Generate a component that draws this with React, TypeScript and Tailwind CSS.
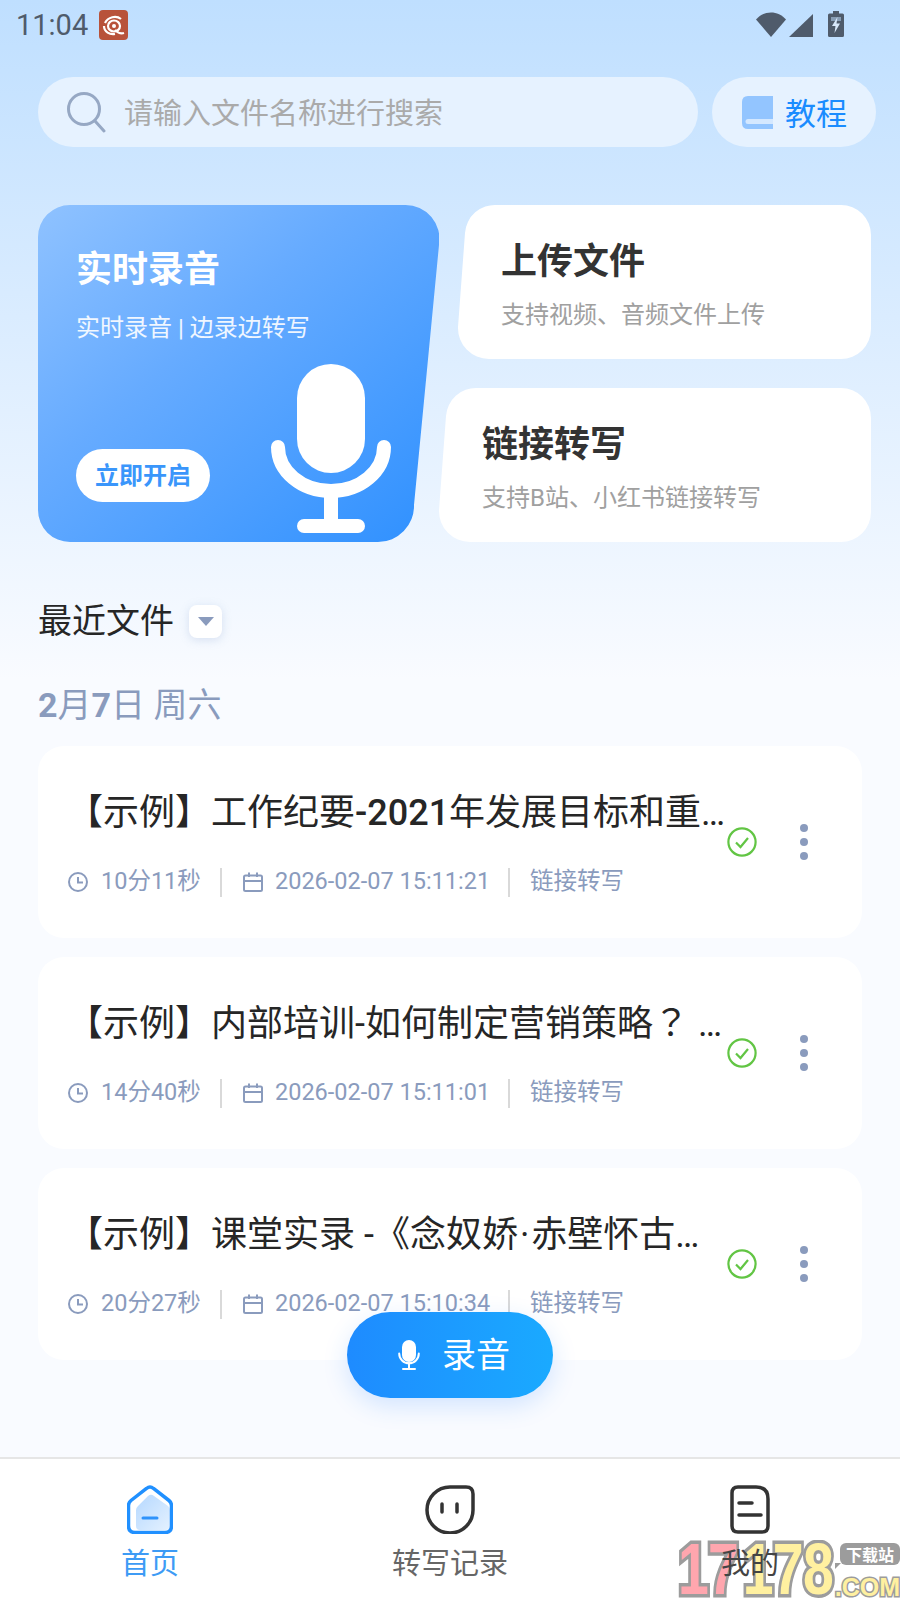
import type { ReactNode } from "react";

const files: { title: ReactNode; duration: string; date: string }[] = [
  {
    title: (
      <>
        【示例】工作纪要<span className="font-medium">-2021</span>年发展目标和重点工作
      </>
    ),
    duration: "10分11秒",
    date: "2026-02-07 15:11:21",
  },
  {
    title: (
      <>
        【示例】内部培训-如何制定营销策略
        <span className="font-['Roboto','Noto_Sans_CJK_TC',sans-serif]">？</span> 如何执行
      </>
    ),
    duration: "14分40秒",
    date: "2026-02-07 15:11:01",
  },
  {
    title: (
      <>
        【示例】课堂实录 -《念奴娇<span className="px-[2px]">·</span>赤壁怀古》赏析
      </>
    ),
    duration: "20分27秒",
    date: "2026-02-07 15:10:34",
  },
];

function StatusBar() {
  return (
    <div className="flex h-[50px] items-center pl-[16px] pr-[56px] text-[#4f5b6b]">
      <span className="text-[29px] leading-none">11:04</span>
      <div className="ml-[11px] flex h-[30px] w-[29px] items-center justify-center rounded-[4px] bg-[#b8523a]">
        <svg width="23" height="23" viewBox="0 0 23 23" fill="none" stroke="#fff" strokeWidth="2.2">
          <path d="M3 9C6 3 14 1 19 5" />
          <ellipse cx="12" cy="12" rx="6" ry="5.5" />
          <path d="M2 12c0 6 6 9 11 8M13 16c3 3 6 4 9 3" />
          <circle cx="12" cy="12" r="2" fill="#fff" stroke="none" />
        </svg>
      </div>
      <div className="mb-[3px] ml-auto flex items-end">
        <svg width="30" height="25" viewBox="0 0 30 25" fill="#4f5b6b">
          <path d="M0 7.5C8-2 22-2 30 7.5L15 25Z" />
        </svg>
        <svg className="ml-[3px]" width="24" height="23" viewBox="0 0 24 23" fill="#4f5b6b">
          <path d="M24 0V23H0Z" />
        </svg>
        <svg className="ml-[15px]" width="16" height="26" viewBox="0 0 16 26">
          <path d="M5 0H11V2.5H14.5Q16 2.5 16 4V24.5Q16 26 14.5 26H1.5Q0 26 0 24.5V4Q0 2.5 1.5 2.5H5Z" fill="#4f5b6b" />
          <path d="M3 6H13V10H3Z" fill="#bfdfff" opacity=".5" />
          <path d="M9.5 6L4 15H7.5L6.5 22L12 12.5H8.5Z" fill="#d8e8fa" />
        </svg>
      </div>
    </div>
  );
}

function SearchRow() {
  return (
    <div className="mt-[27px] flex h-[70px] pl-[38px]">
      <div className="flex w-[660px] items-center rounded-full bg-[#e6f2ff] pl-[29px]">
        <svg width="40" height="42" viewBox="0 0 40 42" fill="none" stroke="#96a8c4" strokeWidth="3" strokeLinecap="round">
          <circle cx="17" cy="18" r="15.5" />
          <path d="M28 30L37 40" />
        </svg>
        <span className="ml-[17px] pt-[4px] text-[29px] leading-none text-[#aaaaaa]">请输入文件名称进行搜索</span>
      </div>
      <div className="ml-[14px] flex w-[164px] items-center rounded-full bg-[#e6f2ff] pl-[30px]">
        <svg width="31" height="33" viewBox="0 0 31 33">
          <path d="M6 0H31V33H6Q0 33 0 27V6Q0 0 6 0Z" fill="#93c5ff" />
          <path d="M6 23H31V28H6Q3.5 28 3.5 25.5T6 23Z" fill="#d4e8ff" />
        </svg>
        <span className="ml-[12px] pt-[4px] text-[31px] leading-none text-[#1a8cff]">教程</span>
      </div>
    </div>
  );
}

function HeroCards() {
  return (
    <div className="mt-[58px] flex pl-[38px]">
      <div className="relative h-[337px] w-[401px] bg-[linear-gradient(140deg,#8fc2ff_0%,#66abff_40%,#2e90ff_100%)] pl-[38px] pt-[40px] [clip-path:path('M32_0H367A34_34_0_0_1_401_40L376_300A36_36_0_0_1_340_337H32A32_32_0_0_1_0_305V32A32_32_0_0_1_32_0Z')]">
        <div className="text-[36px] font-bold leading-[50px] text-white">实时录音</div>
        <div className="mt-[16px] text-[24px] leading-[34px] text-white/90">实时录音 | 边录边转写</div>
        <div className="mt-[104px] flex h-[53px] w-[134px] items-center justify-center rounded-full bg-white text-[24px] font-bold text-[#3a96fb]">
          立即开启
        </div>
        <svg className="absolute left-[233px] top-[159px]" width="120" height="169" viewBox="0 0 120 169" fill="#fff">
          <rect x="26" y="0" width="68" height="109" rx="34" />
          <path d="M7 83A53 44 0 0 0 113 83" fill="none" stroke="#fff" strokeWidth="14" strokeLinecap="round" />
          <rect x="53" y="127" width="14" height="32" />
          <rect x="26" y="155" width="68" height="14" rx="7" />
        </svg>
      </div>
      <div className="flex h-[337px] w-[432px] flex-col justify-between">
        <div className="h-[154px] bg-white pl-[62px] pt-[32px] [clip-path:path('M58_0H402A30_30_0_0_1_432_30V124A30_30_0_0_1_402_154H50A31_31_0_0_1_19_122L26_28A30_30_0_0_1_58_0Z')]">
          <div className="text-[36px] font-bold leading-[50px] text-[#333333]">上传文件</div>
          <div className="mt-[11px] text-[24px] leading-[34px] text-[#a0a0a0]">支持视频、音频文件上传</div>
        </div>
        <div className="h-[154px] bg-white pl-[43px] pt-[32px] [clip-path:path('M38_0H402A30_30_0_0_1_432_30V124A30_30_0_0_1_402_154H31A31_31_0_0_1_0_122L7_28A30_30_0_0_1_38_0Z')]">
          <div className="text-[36px] font-bold leading-[50px] text-[#333333]">链接转写</div>
          <div className="mt-[11px] text-[24px] leading-[34px] text-[#a0a0a0]">支持B站、小红书链接转写</div>
        </div>
      </div>
    </div>
  );
}

function ClockIcon() {
  return (
    <svg width="20" height="20" viewBox="0 0 20 20" fill="none" stroke="#8a9bbd" strokeWidth="2">
      <circle cx="10" cy="10" r="9" />
      <path d="M10 5V10.5H15" />
    </svg>
  );
}

function CalendarIcon() {
  return (
    <svg width="20" height="20" viewBox="0 0 20 20" fill="none" stroke="#8a9bbd" strokeWidth="2">
      <rect x="1" y="3.5" width="18" height="15.5" rx="1.5" />
      <path d="M1 9H19M6 0.5V5M14 0.5V5" />
    </svg>
  );
}

function FileCard({ title, duration, date }: { title: ReactNode; duration: string; date: string }) {
  return (
    <div className="flex h-[192px] items-center rounded-[26px] bg-white pl-[30px]">
      <div className="h-full w-[659px] pt-[45px]">
        <div className="ml-[-1px] truncate text-[36px] leading-[44px] text-[#262626]">{title}</div>
        <div className="mt-[32px] flex h-[30px] items-center whitespace-nowrap text-[23.5px] leading-none text-[#8a9bbd]">
          <ClockIcon />
          <span className="ml-[13px] w-[98px]">{duration}</span>
          <div className="ml-[21px] h-[29px] w-[2px] bg-[#d9d9d9]" />
          <div className="ml-[21px]">
            <CalendarIcon />
          </div>
          <span className="ml-[12px] w-[213px]">{date}</span>
          <div className="ml-[20px] h-[29px] w-[2px] bg-[#d9d9d9]" />
          <span className="ml-[20px]">链接转写</span>
        </div>
      </div>
      <svg width="30" height="30" viewBox="0 0 30 30" fill="none" stroke="#62c544">
        <circle cx="15" cy="15" r="13.6" strokeWidth="2.2" />
        <path d="M9 15.5L13.5 20L21 11" strokeWidth="2.2" />
      </svg>
      <div className="ml-[43px] flex flex-col gap-[6px]">
        <div className="size-[8px] rounded-full bg-[#8a9bbd]" />
        <div className="size-[8px] rounded-full bg-[#8a9bbd]" />
        <div className="size-[8px] rounded-full bg-[#8a9bbd]" />
      </div>
    </div>
  );
}

function BottomNav() {
  return (
    <div className="relative flex h-[143px] border-t-2 border-[#e6e6e6] bg-white pt-[26px]">
      <div className="flex w-[300px] flex-col items-center">
        <svg width="46" height="49" viewBox="0 0 46 49" fill="none">
          <defs>
            <linearGradient id="homeFill" x1="0" y1="0" x2="1" y2="1">
              <stop offset="0" stopColor="#b5d8ff" />
              <stop offset="1" stopColor="#e4f1ff" />
            </linearGradient>
          </defs>
          <path d="M21 11Q24 8.500 27 11L41 21Q43 23 43 25V41Q43 45 39 45H13Q9 45 9 41V25Q9 23 11 21Z" fill="url(#homeFill)" />
          <path d="M19.500 3.500Q23 .5 26.500 3.500L42 15.500Q44.500 17.500 44.500 20.500V41Q44.500 47.500 38 47.500H8Q1.500 47.500 1.500 41V20.500Q1.500 17.500 4 15.500Z" stroke="#2090ff" strokeWidth="3.500" />
          <path d="M16 33H30" stroke="#2f93fb" strokeWidth="3" strokeLinecap="round" />
        </svg>
        <span className="mt-[10px] text-[29px] leading-[40px] text-[#3d9bf5]">首页</span>
      </div>
      <div className="flex w-[300px] flex-col items-center">
        <svg width="50" height="49" viewBox="0 0 50 49" fill="none" stroke="#333" strokeWidth="3.500" strokeLinecap="round">
          <path d="M25 2H41Q48 2 48 9V25A23 23 0 1 1 25 2Z" />
          <path d="M17 19V27M32 19V27" />
        </svg>
        <span className="mt-[10px] text-[29px] leading-[40px] text-[#666666]">转写记录</span>
      </div>
      <div className="flex w-[300px] flex-col items-center">
        <svg width="40" height="49" viewBox="0 0 40 49" fill="none" stroke="#333" strokeWidth="3.500" strokeLinecap="round">
          <path d="M8 2H26Q38 2 38 14V41Q38 47 32 47H8Q2 47 2 41V8Q2 2 8 2Z" />
          <path d="M9 18H22M9 30H31" />
        </svg>
        <span className="relative z-10 mt-[10px] text-[29px] leading-[40px] text-[#444444]">我的</span>
      </div>
      {/* site watermark sits over the corner of the tab bar */}
      <div className="absolute bottom-0 right-0 h-[60px] w-[223px] overflow-hidden font-['Liberation_Sans',sans-serif] font-bold">
        <div className="absolute left-[1px] top-[-7px] flex origin-left scale-x-[0.77] text-[72px] leading-[72px] tracking-[-1px] [-webkit-text-stroke:7px_#9c9c9c] [paint-order:stroke_fill]">
          <span className="text-[#ffa6ae]">17</span>
          <span className="ml-[6px] text-[#fff0a0]">178</span>
        </div>
        <div className="absolute right-0 top-[3px] flex h-[22px] w-[60px] items-center justify-center rounded-[6px] bg-[#9c9c9c] font-['Noto_Sans_CJK_SC',sans-serif] text-[16px] leading-none text-white">
          下载站
        </div>
        <div className="absolute left-[158px] top-[23px] h-0 w-0 border-r-[6px] border-t-[6px] border-r-transparent border-t-[#9c9c9c]" />
        <div className="absolute right-0 top-[33px] text-[25px] leading-[28px] text-[#fff0a0] [-webkit-text-stroke:3px_#9c9c9c] [paint-order:stroke_fill]">
          .COM
        </div>
      </div>
    </div>
  );
}

export default function App() {
  return (
    <div className="relative flex h-[1600px] w-[900px] flex-col overflow-hidden bg-[linear-gradient(180deg,#bfdfff_0px,#f9fbff_680px)] font-['Roboto','Noto_Sans_CJK_SC',sans-serif]">
      <StatusBar />
      <SearchRow />
      <HeroCards />

      <div className="mt-[59px] flex items-center pl-[38px]">
        <span className="text-[34px] leading-[40px] text-[#262626]">最近文件</span>
        <div className="ml-[15px] flex size-[33px] items-center justify-center rounded-[8px] bg-white shadow-[0_2px_10px_rgba(120,150,200,0.25)]">
          <div className="h-0 w-0 border-x-[8px] border-t-[9px] border-x-transparent border-t-[#8a9bbd]" />
        </div>
      </div>
      <div className="mt-[42px] pl-[38px] text-[34px] leading-[44px] text-[#8a9bbd]">
        <span className="font-bold">2</span>月<span className="font-bold">7</span>日 周六
      </div>

      <div className="mt-[19px] flex w-[862px] flex-col gap-[19px] pl-[38px]">
        {files.map((file) => (
          <FileCard key={file.date} title={file.title} duration={file.duration} date={file.date} />
        ))}
      </div>

      <div className="flex-1" />
      <BottomNav />

      <div className="absolute left-[347px] top-[1312px] flex h-[86px] w-[206px] items-center rounded-full bg-[linear-gradient(90deg,#1e8bff,#1aaaff)] pl-[51px] shadow-[0_8px_24px_rgba(40,130,255,0.18)]">
        <svg width="22" height="30" viewBox="0 0 22 30" fill="#fff">
          <rect x="4" y="0" width="14" height="22" rx="7" />
          <path d="M1.200 13.500A9.800 9.800 0 0 0 20.800 13.500" fill="none" stroke="#fff" strokeWidth="2" strokeLinecap="round" />
          <path d="M11 23V28.500M5 29H17" fill="none" stroke="#fff" strokeWidth="2" strokeLinecap="round" />
        </svg>
        <span className="ml-[22px] text-[34px] leading-none text-white">录音</span>
      </div>
    </div>
  );
}
